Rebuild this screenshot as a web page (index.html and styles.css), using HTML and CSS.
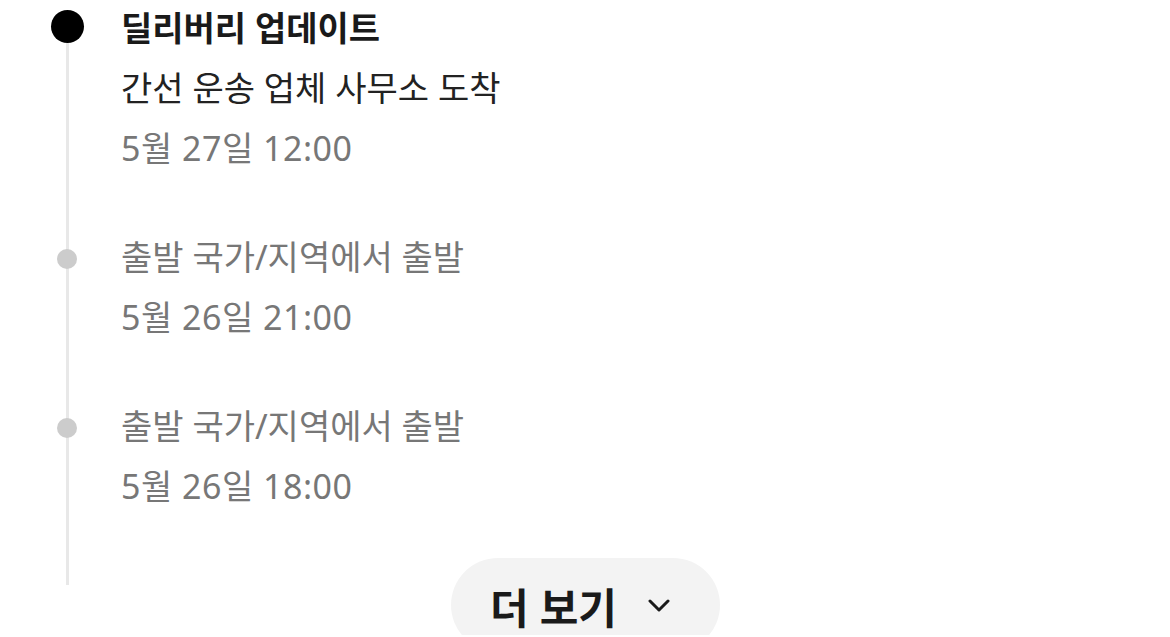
FILE: index.html
```html
<!DOCTYPE html>
<html lang="ko">
<head>
<meta charset="utf-8">
<title>배송 추적</title>
<link rel="stylesheet" href="styles.css">
</head>
<body>
<main class="tracking">
  <ol class="timeline">
    <li class="event event--current">
      <div class="marker"><span class="dot"></span></div>
      <div class="details">
        <p class="title">딜리버리 업데이트</p>
        <p class="desc">간선 운송 업체 사무소 도착</p>
        <p class="time">5월 27일 12:00</p>
      </div>
    </li>
    <li class="event">
      <div class="marker"><span class="dot"></span></div>
      <div class="details">
        <p class="desc">출발 국가/지역에서 출발</p>
        <p class="time">5월 26일 21:00</p>
      </div>
    </li>
    <li class="event">
      <div class="marker"><span class="dot"></span></div>
      <div class="details">
        <p class="desc">출발 국가/지역에서 출발</p>
        <p class="time">5월 26일 18:00</p>
      </div>
    </li>
  </ol>
  <div class="more-row">
    <button class="more" type="button">
      <span>더 보기</span>
      <svg class="chev" width="22" height="14" viewBox="0 0 22 14" aria-hidden="true">
        <path d="M2 2 L11 11 L20 2" fill="none" stroke="#1a1a1a" stroke-width="3" stroke-linecap="round" stroke-linejoin="round"/>
      </svg>
    </button>
  </div>
</main>
</body>
</html>
```

FILE: styles.css
```css
* { box-sizing: border-box; }

html, body {
  margin: 0;
  background: #ffffff;
  overflow: hidden;
}

body {
  font-family: "Noto Sans", "Noto Sans CJK KR", sans-serif;
  color: #222222;
}

.tracking {
  width: 1170px;
  height: 637px;
}

.timeline {
  position: relative;
  list-style: none;
  margin: -2px 0 0 0;
  padding: 0;
  display: flex;
  flex-direction: column;
  gap: 49px;
}

/* vertical rail behind the dots */
.timeline::before {
  content: "";
  position: absolute;
  left: 66px;
  top: 44px;
  width: 3px;
  height: 543px;
  background: #e8e8e8;
}

.event {
  display: grid;
  grid-template-columns: 121px 1fr;
}

.marker {
  height: 60px;
  display: flex;
  align-items: center;
  position: relative;
}

.dot {
  display: block;
  width: 20px;
  height: 20px;
  margin-left: 57px;
  margin-top: 4px;
  border-radius: 50%;
  background: #cccccc;
  position: relative;
}

.event--current .dot {
  width: 33px;
  height: 33px;
  margin-left: 51px;
  margin-top: -4px;
  background: #000000;
}

.details p {
  margin: 0;
  height: 60px;
  line-height: 60px;
  font-size: 34px;
  white-space: nowrap;
}

.title {
  font-weight: 700;
  color: #1a1a1a;
}

.desc { color: #222222; }

.event:not(.event--current) .desc { color: #777777; }

.details .time {
  color: #777777;
  letter-spacing: 0.5px;
}

.more-row {
  display: flex;
  justify-content: center;
  margin-top: 42px;
}

.more {
  width: 269px;
  height: 94px;
  border: none;
  border-radius: 47px;
  background: #f3f3f3;
  display: flex;
  align-items: center;
  justify-content: center;
  gap: 31px;
  padding: 0 10px 0 0;
  font-family: inherit;
  font-size: 42px;
  font-weight: 700;
  color: #1a1a1a;
}

.chev { display: block; margin-top: 2px; }
```
